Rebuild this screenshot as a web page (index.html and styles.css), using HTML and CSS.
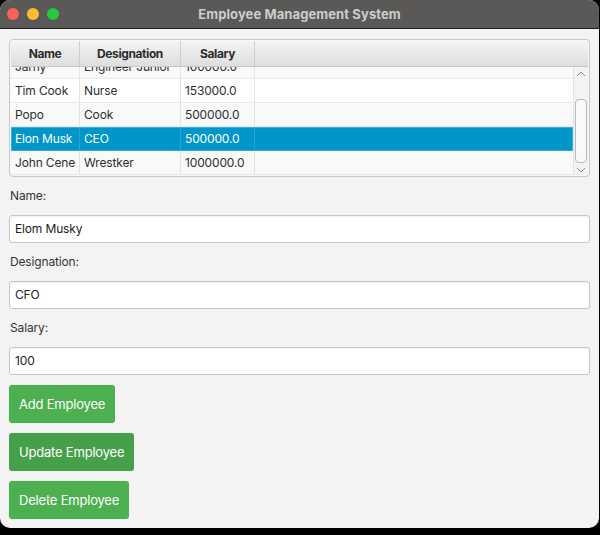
FILE: index.html
```html
<!DOCTYPE html>
<html>
<head>
<meta charset="utf-8">
<link rel="stylesheet" href="styles.css">
</head>
<body>
<div class="window">
  <div class="titlebar">
    <div class="lights">
      <span class="light red"></span>
      <span class="light yellow"></span>
      <span class="light green"></span>
    </div>
    <div class="title">Employee Management System</div>
  </div>
  <div class="content">
    <div class="table">
      <div class="thead">
        <div class="th c1">Name</div>
        <div class="th c2">Designation</div>
        <div class="th c3">Salary</div>
        <div class="th c4"></div>
      </div>
      <div class="tbody-wrap">
        <div class="tbody">
          <div class="row odd first">
            <div class="td c1">Jarny</div><div class="td c2">Engineer Junior</div><div class="td c3">100000.0</div><div class="td c4"></div>
          </div>
          <div class="row">
            <div class="td c1">Tim Cook</div><div class="td c2">Nurse</div><div class="td c3">153000.0</div><div class="td c4"></div>
          </div>
          <div class="row odd">
            <div class="td c1">Popo</div><div class="td c2">Cook</div><div class="td c3">500000.0</div><div class="td c4"></div>
          </div>
          <div class="row selected">
            <div class="td c1">Elon Musk</div><div class="td c2">CEO</div><div class="td c3">500000.0</div><div class="td c4"></div>
          </div>
          <div class="row odd">
            <div class="td c1">John Cene</div><div class="td c2">Wrestker</div><div class="td c3">1000000.0</div><div class="td c4"></div>
          </div>
        </div>
        <div class="scrollbar">
          <svg class="arrow" width="10" height="6" viewBox="0 0 10 6"><path d="M1 5 L5 1 L9 5" fill="none" stroke="#8a8a8a" stroke-width="1"/></svg>
          <div class="track"><div class="thumb"></div></div>
          <svg class="arrow" width="10" height="6" viewBox="0 0 10 6"><path d="M1 1 L5 5 L9 1" fill="none" stroke="#8a8a8a" stroke-width="1"/></svg>
        </div>
      </div>
    </div>

    <div class="label">Name:</div>
    <div class="field">Elom Musky</div>
    <div class="label">Designation:</div>
    <div class="field">CFO</div>
    <div class="label">Salary:</div>
    <div class="field">100</div>

    <div class="btn">Add Employee</div>
    <div class="btn hover">Update Employee</div>
    <div class="btn">Delete Employee</div>
  </div>
</div>
</body>
</html>
```

FILE: styles.css
```css
html, body {
  margin: 0;
  padding: 0;
  background: #000;
  font-family: "Inter", "Noto Sans", sans-serif;
}
.window {
  width: 599px;
  height: 528px;
  background: #f3f3f3;
  border-radius: 10px;
  overflow: hidden;
  box-sizing: border-box;
}
.titlebar {
  height: 28px;
  background: #5a5957;
  border-bottom: 1px solid #1c1c1c;
  display: flex;
  align-items: center;
  position: relative;
}
.lights {
  display: flex;
  gap: 8px;
  padding-left: 7px;
}
.light {
  width: 12px;
  height: 12px;
  border-radius: 50%;
  display: block;
}
.red { background: #fe5f57; }
.yellow { background: #febc2e; }
.green { background: #28c840; }
.title {
  position: absolute;
  left: 0;
  right: 0;
  top: 0;
  line-height: 29px;
  text-align: center;
  color: #cdcdcd;
  font-weight: 700;
  font-size: 13px;
  letter-spacing: 0.1px;
}
.content {
  padding: 10px 9px;
  display: flex;
  flex-direction: column;
  gap: 10px;
}
.table {
  border: 1px solid #c9c9c9;
  border-radius: 4px;
  padding: 1px;
  background: #f7f7f7;
  height: 138px;
  box-sizing: border-box;
  display: flex;
  flex-direction: column;
}
.thead {
  display: flex;
  height: 25px;
  background: linear-gradient(#f4f4f4, #dedede);
  border-bottom: 1px solid #c6c6c6;
  border-radius: 2px 2px 0 0;
  flex: none;
}
.th {
  font-weight: 700;
  font-size: 12px;
  letter-spacing: -0.4px;
  color: #2b2b2b;
  text-align: center;
  line-height: 26px;
  border-right: 1px solid #cfcfcf;
  box-sizing: border-box;
}
.c1 { width: 69px; }
.c2 { width: 101px; }
.c3 { width: 74px; }
.c4 { flex: 1; border-right: none; }
.thead .c4 { border-right: none; }
.tbody-wrap {
  flex: 1;
  display: flex;
  overflow: hidden;
}
.tbody {
  flex: 1;
  overflow: hidden;
}
.row {
  display: flex;
  height: 24px;
  background: #ffffff;
  border-bottom: 1px solid #e9e9e9;
  box-sizing: border-box;
}
.row.odd { background: #f9f9f9; }
.row.first { margin-top: -12px; }
.td {
  font-size: 12px;
  letter-spacing: -0.15px;
  color: #2e2e2e;
  line-height: 23px;
  padding-left: 4px;
  border-right: 1px solid #e4e4e4;
  box-sizing: border-box;
  white-space: nowrap;
  overflow: hidden;
}
.row .c4 { border-right: none; }
.row.selected {
  background: #0096c9;
  border: 1px solid #3aaee0;
}
.row.selected .td {
  color: #fff;
  line-height: 22px;
  border-right-color: #26a3d3;
}
.row.selected .c1 { padding-left: 3px; width: 68px; }
.scrollbar {
  width: 15px;
  flex: none;
  background: #f3f3f3;
  border-left: 1px solid #e2e2e2;
  display: flex;
  flex-direction: column;
  align-items: center;
  box-sizing: border-box;
}
.arrow {
  display: block;
  margin: 4px 0 3px;
}
.scrollbar .arrow:last-child { margin: 3px 0 2px; }
.track {
  flex: 1;
  width: 100%;
  display: flex;
  flex-direction: column;
  justify-content: flex-end;
  padding: 0 1px 0 1px;
  box-sizing: border-box;
}
.thumb {
  height: 62px;
  margin-bottom: 1px;
  background: #f9f9f9;
  border: 1px solid #b9b9b9;
  border-radius: 4px;
}
.label {
  font-size: 12px;
  letter-spacing: -0.15px;
  color: #333;
  line-height: 18px;
  padding-left: 1px;
}
.field {
  height: 28px;
  box-sizing: border-box;
  border: 1px solid #c6c6c6;
  border-radius: 3px;
  background: #fff;
  box-shadow: inset 0 1px 1px rgba(0,0,0,0.06);
  font-size: 12px;
  letter-spacing: -0.15px;
  color: #222;
  line-height: 26px;
  padding-left: 5px;
}
.btn {
  align-self: flex-start;
  background: #4caf50;
  color: #fff;
  font-size: 13px;
  letter-spacing: -0.2px;
  line-height: 18px;
  padding: 10px 10px;
  border-radius: 3px;
}
.btn.hover { background: #45a049; }
```
